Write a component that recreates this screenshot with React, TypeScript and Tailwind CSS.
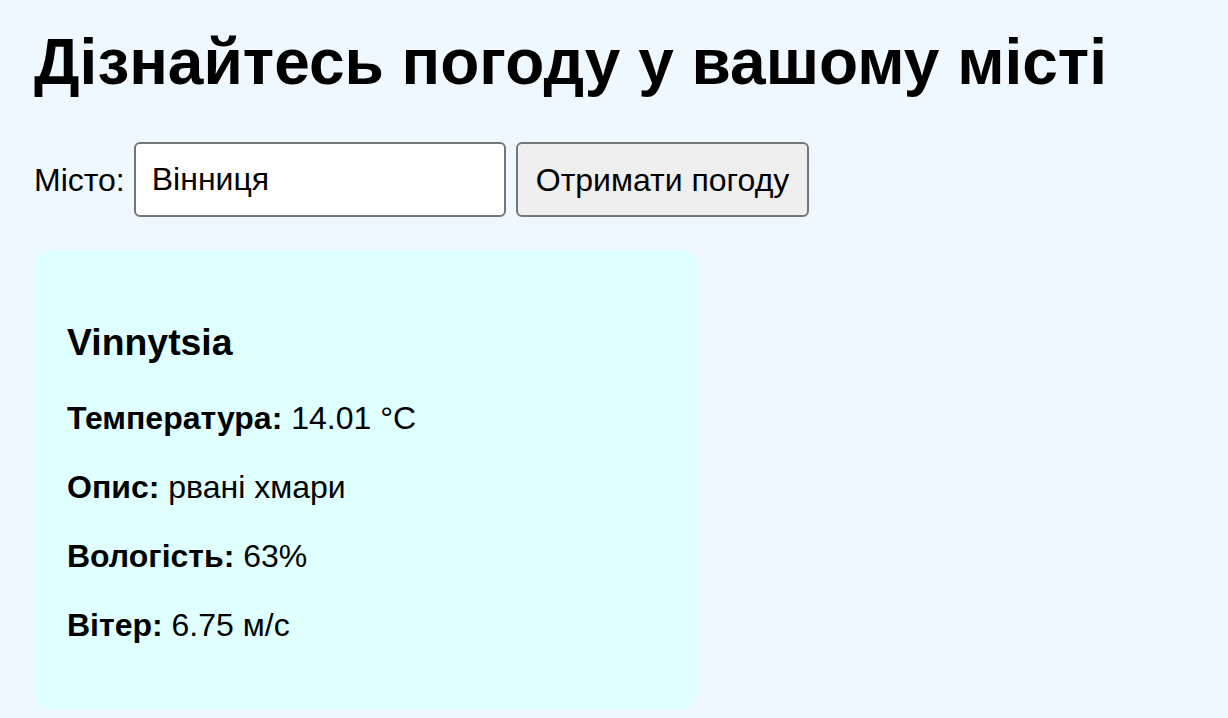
import { useState } from "react";

type Weather = {
  name: string;
  temp: number;
  description: string;
  humidity: number;
  wind: number;
};

const sample: Weather = {
  name: "Vinnytsia",
  temp: 14.01,
  description: "рвані хмари",
  humidity: 63,
  wind: 6.75,
};

export default function App() {
  const [city, setCity] = useState("Вінниця");
  const weather = sample;

  return (
    <div className="min-h-screen bg-[#f0f8ff] px-[34px] pt-[25px] text-black font-['Liberation_Sans',Arial,sans-serif]">
      {/* HEADING */}
      <h1 className="text-[64px] leading-[74px] font-bold">
        Дізнайтесь погоду у вашому місті
      </h1>

      {/* FORM */}
      <form
        className="mt-[43px] flex items-center gap-[9px] text-[32px]"
        onSubmit={(e) => e.preventDefault()}
      >
        <label htmlFor="city">Місто:</label>
        <input
          id="city"
          value={city}
          onChange={(e) => setCity(e.target.value)}
          className="h-[75px] w-[372px] rounded-[6px] border-2 border-[#767676] bg-white px-[16px] text-[32px] outline-none"
        />
        <button
          type="submit"
          className="ml-px h-[75px] rounded-[6px] border-2 border-[#767676] bg-[#efefef] px-[18px] text-[32px]"
        >
          Отримати погоду
        </button>
      </form>

      {/* RESULT CARD */}
      <div className="mt-[33px] w-[664px] rounded-[16px] bg-[#e0ffff] px-[33px] pt-[71px] pb-[65px]">
        <h3 className="text-[37.4px] leading-[43px] font-bold">{weather.name}</h3>
        <div className="mt-[36px] flex flex-col gap-[32px] text-[32px] leading-[37px]">
          <p>
            <strong>Температура:</strong> {weather.temp} °C
          </p>
          <p>
            <strong>Опис:</strong> {weather.description}
          </p>
          <p>
            <strong>Вологість:</strong> {weather.humidity}%
          </p>
          <p>
            <strong>Вітер:</strong> {weather.wind} м/с
          </p>
        </div>
      </div>
    </div>
  );
}
